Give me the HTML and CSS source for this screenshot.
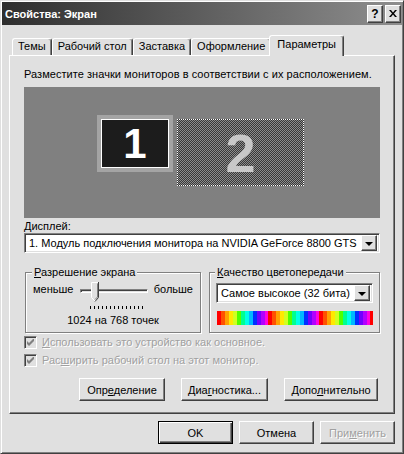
FILE: index.html
```html
<!DOCTYPE html>
<html lang="ru">
<head>
    <meta charset="UTF-8">
    <title>Свойства: Экран</title>
    <link rel="stylesheet" href="styles.css">
</head>
<body>
    <div class="window">
        <div class="titlebar">
            <span class="title">Свойства: Экран</span>
            <div class="title-btns">
                <button class="btn tbtn">?</button>
                <button class="btn tbtn">
                    <svg width="8" height="7" viewBox="0 0 8 7"><path d="M0 0h2l2 2.5L6 0h2L5 3.5 8 7H6L4 4.5 2 7H0l3-3.5z" fill="#000"/></svg>
                </button>
            </div>
        </div>

        <div class="tabs">
            <div class="tab">Темы</div>
            <div class="tab">Рабочий стол</div>
            <div class="tab">Заставка</div>
            <div class="tab">Оформление</div>
            <div class="tab active">Параметры</div>
        </div>

        <div class="panel">
            <p class="hint">Разместите значки мониторов в соответствии с их расположением.</p>

            <div class="monitors">
                <div class="monitor m1"><div class="screen">1</div></div>
                <div class="monitor m2">2</div>
            </div>

            <label class="field-label"><u>Д</u>исплей:</label>
            <div class="select">
                <span class="val">1. Модуль подключения монитора на NVIDIA GeForce 8800 GTS</span>
                <span class="btn drop"><i class="arrow"></i></span>
            </div>

            <div class="groups">
                <fieldset class="group res">
                    <legend><u>Р</u>азрешение экрана</legend>
                    <div class="slider-row">
                        <span>меньше</span>
                        <div class="slider">
                            <div class="track"></div>
                            <svg class="thumb" width="8" height="20" viewBox="0 0 8 20">
                                <path d="M0.5 0.5H7.5V15.5L4 19L0.5 15.5Z" fill="#e0e0e0"/>
                                <path d="M0.5 15.5V0.5H7" stroke="#fff" fill="none"/>
                                <path d="M0.5 15.5L4 19" stroke="#fff" fill="none"/>
                                <path d="M7.5 0V15.5L4 19.5" stroke="#404040" fill="none"/>
                                <path d="M6.5 1.5V15L4 17.5" stroke="#808080" fill="none"/>
                            </svg>
                            <div class="ticks"></div>
                        </div>
                        <span>больше</span>
                    </div>
                    <div class="res-value">1024 на 768 точек</div>
                </fieldset>

                <fieldset class="group color">
                    <legend><u>К</u>ачество цветопередачи</legend>
                    <div class="select small">
                        <span class="val">Самое высокое (32 бита)</span>
                        <span class="btn drop"><i class="arrow"></i></span>
                    </div>
                    <div class="colorbar"></div>
                </fieldset>
            </div>

            <div class="check">
                <span class="box"><svg width="7" height="7" viewBox="0 0 7 7"><path d="M0 2v3l2 2 5-5V-1L2 4z" fill="#808080"/></svg></span>
                <span class="disabled"><u>И</u>спользовать это устройство как основное.</span>
            </div>
            <div class="check">
                <span class="box"><svg width="7" height="7" viewBox="0 0 7 7"><path d="M0 2v3l2 2 5-5V-1L2 4z" fill="#808080"/></svg></span>
                <span class="disabled">Рас<u>ш</u>ирить рабочий стол на этот монитор.</span>
            </div>

            <div class="panel-btns">
                <button class="btn b-ident">Опр<u>е</u>деление</button>
                <button class="btn b-diag">Диа<u>г</u>ностика...</button>
                <button class="btn b-adv">Допо<u>л</u>нительно</button>
            </div>
        </div>

        <div class="dialog-btns">
            <button class="btn default">OK</button>
            <button class="btn">Отмена</button>
            <button class="btn"><span class="disabled">При<u>м</u>енить</span></button>
        </div>
    </div>
</body>
</html>
```

FILE: styles.css
```css
* {
    margin: 0;
    padding: 0;
    box-sizing: border-box;
}

body {
    font-family: "Liberation Sans", Arial, sans-serif;
    font-size: 11px;
    color: #000;
    background-color: #e0e0e0;
}

.window {
    width: 404px;
    height: 454px;
    background-color: #e0e0e0;
    border: 1px solid;
    border-color: #dfdfdf #404040 #404040 #dfdfdf;
    box-shadow: inset 1px 1px #fff, inset -1px -1px #808080;
    padding: 1px;
}

/* title bar */

.titlebar {
    height: 23px;
    display: flex;
    align-items: center;
    justify-content: space-between;
    padding: 0 1px 0 3px;
    background-image: linear-gradient(to right, #2e2e2e, #8e8e8e);
}

.title {
    color: white;
    font-weight: bold;
    font-size: 11px;
}

.title-btns {
    display: flex;
    gap: 2px;
}

.btn {
    font-family: inherit;
    font-size: 11px;
    color: #000;
    background-color: #e0e0e0;
    border: 1px solid;
    border-color: #fff #404040 #404040 #fff;
    box-shadow: inset -1px -1px #808080, inset 1px 1px #dfdfdf;
}

.tbtn {
    width: 16px;
    height: 18px;
    font-weight: bold;
    font-size: 12px;
    display: flex;
    align-items: center;
    justify-content: center;
}

/* tabs */

.tabs {
    display: flex;
    align-items: flex-end;
    height: 30px;
    padding-left: 10px;
}

.tab {
    height: 17px;
    line-height: 15px;
    padding: 0 5px;
    border: 1px solid;
    border-bottom: none;
    border-color: #fff #404040 transparent #fff;
    box-shadow: inset -1px 0 #808080;
    border-radius: 3px 3px 0 0;
}

.tab.active {
    height: 21px;
    line-height: 17px;
    padding: 0 7px;
    margin: 0 -2px -1px;
    background-color: #e0e0e0;
    position: relative;
    z-index: 1;
}

/* panel */

.panel {
    margin: 0 7px;
    height: 359px;
    border: 1px solid;
    border-color: #fff #404040 #404040 #fff;
    box-shadow: inset -1px -1px #808080;
    padding: 12px 14px 0;
}

.hint {
    line-height: 13px;
    margin-bottom: 6px;
    letter-spacing: 0.05px;
}

.monitors {
    height: 131px;
    background-color: #808080;
    position: relative;
}

.monitor {
    position: absolute;
    font-weight: bold;
}

.m1 {
    left: 73px;
    top: 28px;
    width: 76px;
    height: 57px;
    padding: 4px;
    background-color: #a4a4a4;
}

.m1 .screen {
    height: 100%;
    background-color: #1c1c1c;
    border: 1px solid #fff;
    color: white;
    font-size: 42px;
    display: flex;
    align-items: center;
    justify-content: center;
}

.m2 {
    left: 153px;
    top: 32px;
    width: 127px;
    height: 67px;
    border: 1px dotted #fff;
    background: repeating-conic-gradient(#383838 0 25%, #8c8c8c 0 50%) 0 0 / 2px 2px;
    color: #c8c8c8;
    font-size: 54px;
    display: flex;
    align-items: center;
    justify-content: center;
}

.field-label {
    display: block;
    margin-top: 2px;
    line-height: 13px;
}

.select {
    height: 20px;
    display: flex;
    align-items: center;
    background-color: white;
    border: 1px solid;
    border-color: #808080 #fff #fff #808080;
    box-shadow: inset 1px 1px #404040, inset -1px -1px #dfdfdf;
    padding: 1px 2px 1px 1px;
}

.select .val {
    flex: 1;
    padding-left: 3px;
    white-space: nowrap;
    overflow: hidden;
}

.drop {
    width: 16px;
    height: 16px;
    display: flex;
    align-items: center;
    justify-content: center;
}

.arrow {
    width: 0;
    height: 0;
    border-left: 4px solid transparent;
    border-right: 4px solid transparent;
    border-top: 4px solid #000;
    margin-top: 1px;
}

/* group boxes */

.groups {
    display: flex;
    gap: 8px;
    margin-top: 13px;
    margin-left: 1px;
}

.group {
    border: 1px solid #808080;
    box-shadow: inset 1px 1px #fff, 1px 1px #fff;
    padding: 3px 7px 5px;
}

.group legend {
    line-height: 13px;
    padding: 0 2px;
    margin-left: -1px;
    background-color: #e0e0e0;
}

.res {
    width: 176px;
}

.color {
    flex: 1;
    padding: 3px 6px 5px;
}

.slider-row {
    display: flex;
    justify-content: space-between;
    height: 20px;
    line-height: 15px;
}

.slider {
    width: 68px;
    height: 20px;
    position: relative;
}

.track {
    margin-top: 7px;
    height: 4px;
    border: 1px solid;
    border-color: #808080 #fff #fff #808080;
    box-shadow: inset 1px 1px #404040;
}

.thumb {
    position: absolute;
    left: 11px;
    top: 0;
}

.ticks {
    position: absolute;
    left: 10px;
    top: 24px;
    width: 54px;
    height: 3px;
    background-image: repeating-linear-gradient(to right, #000 0 1px, transparent 1px 4px);
}

.res-value {
    text-align: center;
    line-height: 13px;
    margin-top: 12px;
}

.select.small {
    margin-top: 1px;
}

.colorbar {
    height: 14px;
    margin-top: 8px;
    margin-left: 1px;
    background-image: repeating-linear-gradient(to right,
        #ff0000 0 4px, #ff5000 4px 8px, #ffa000 8px 12px, #ffe800 12px 16px,
        #d0ff20 16px 20px, #50ff00 20px 24px, #00ff90 24px 28px, #00ffe8 28px 32px,
        #00b8ff 32px 36px, #0030ff 36px 40px, #7000ff 40px 44px, #b000ff 44px 48px,
        #ff00e0 48px 51px);
}

/* checkboxes */

.check {
    display: flex;
    align-items: center;
    gap: 5px;
    height: 18px;
}

.check:first-of-type {
    margin-top: 2px;
}

.box {
    width: 13px;
    height: 13px;
    display: flex;
    align-items: center;
    justify-content: center;
    background-color: #e0e0e0;
    border: 1px solid;
    border-color: #808080 #fff #fff #808080;
    box-shadow: inset 1px 1px #404040, inset -1px -1px #dfdfdf;
}

.disabled {
    color: #a0a0a0;
    text-shadow: 1px 1px #fff;
}

/* buttons */

.panel-btns {
    display: flex;
    justify-content: flex-end;
    gap: 16px;
    margin-top: 9px;
    margin-right: 2px;
}

.panel-btns .btn {
    height: 23px;
}

.b-ident {
    width: 86px;
}

.b-diag {
    width: 87px;
}

.b-adv {
    width: 94px;
}

.dialog-btns {
    display: flex;
    justify-content: flex-end;
    gap: 6px;
    margin-top: 7px;
    margin-right: 7px;
}

.dialog-btns .btn {
    width: 75px;
    height: 23px;
}

.dialog-btns .default {
    border: 1px solid #000;
    box-shadow: inset 1px 1px #fff, inset -1px -1px #404040, inset -2px -2px #808080;
}
```
